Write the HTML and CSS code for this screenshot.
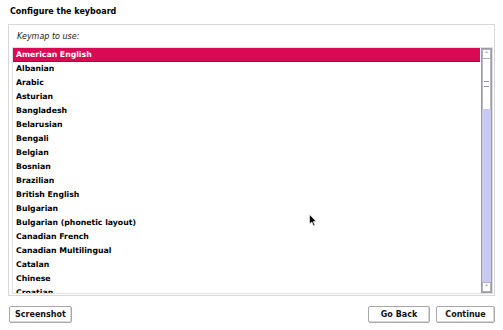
FILE: index.html
```html
<!DOCTYPE html>
<html lang="en">
  <head>
    <meta charset="utf-8" />
    <title>Configure the keyboard</title>
    <link rel="stylesheet" href="styles.css">
  </head>
  <body>
    <div class="screen">
      <h1 class="title">Configure the keyboard</h1>

      <div class="frame">
        <div class="question">Keymap to use:</div>
        <div class="listbox">
          <ul class="options">
            <li class="selected">American English</li>
            <li>Albanian</li>
            <li>Arabic</li>
            <li>Asturian</li>
            <li>Bangladesh</li>
            <li>Belarusian</li>
            <li>Bengali</li>
            <li>Belgian</li>
            <li>Bosnian</li>
            <li>Brazilian</li>
            <li>British English</li>
            <li>Bulgarian</li>
            <li>Bulgarian (phonetic layout)</li>
            <li>Canadian French</li>
            <li>Canadian Multilingual</li>
            <li>Catalan</li>
            <li>Chinese</li>
            <li>Croatian</li>
          </ul>
          <div class="scrollbar">
            <div class="arrow">&#708;</div>
            <div class="thumb"><span class="grip"></span></div>
            <div class="track"></div>
            <div class="arrow">&#709;</div>
          </div>
        </div>
      </div>

      <div class="buttons">
        <button class="btn btn-shot">Screenshot</button>
        <span class="spacer"></span>
        <button class="btn btn-back">Go Back</button>
        <button class="btn">Continue</button>
      </div>

      <svg class="pointer" width="8" height="13" viewBox="0 0 8 13">
        <path d="M0.5 0.5 L0.5 10 L2.8 8 L4.6 12 L6 11.3 L4.2 7.5 L7.2 7.5 Z" fill="#000" stroke="#fff" stroke-width="0.6" />
      </svg>
    </div>
  </body>
</html>
```

FILE: styles.css
```css
body {
  margin: 0;
  background-color: #fff;
  font-family: "DejaVu Sans", sans-serif;
  font-size: 8px;
  color: #000;
}

.screen {
  position: relative;
  width: 503px;
  height: 330px;
  display: flex;
  flex-direction: column;
  padding: 0 8px;
  box-sizing: border-box;
}

.title {
  margin: 0;
  padding: 7px 0 0 2px;
  height: 24px;
  font-size: 8px;
  font-weight: bold;
  box-sizing: border-box;
}

.frame {
  height: 272px;
  border: 1px solid #d8d8d8;
  box-sizing: border-box;
  padding: 0 1px 0 3px;
  display: flex;
  flex-direction: column;
}

.question {
  height: 22px;
  padding: 7px 0 0 5px;
  box-sizing: border-box;
  font-style: italic;
  color: #222;
}

.listbox {
  display: flex;
  height: 247px;
  border: 1px solid #e0e0e0;
  box-sizing: border-box;
}

.options {
  flex: 1;
  list-style: none;
  margin: 0;
  padding: 0;
  overflow: hidden;
  font-weight: bold;
  font-size: 7.75px;
}

.options li {
  height: 14px;
  line-height: 14px;
  padding-left: 3px;
  white-space: nowrap;
}

.options li.selected {
  background-color: #d70a53;
  color: #fff;
  border-bottom: 1px solid #a8063e;
  height: 13px;
  line-height: 13px;
}

.scrollbar {
  width: 9px;
  margin-left: 1px;
  border: 1px solid #9a9aa8;
  display: flex;
  flex-direction: column;
  background-color: #c9c9f2;
}

.arrow {
  height: 10px;
  line-height: 10px;
  text-align: center;
  font-size: 7px;
  background-color: #fff;
  border: 1px solid #b0b0bc;
  box-sizing: border-box;
  color: #333;
}

.thumb {
  height: 50px;
  background-color: #fff;
  border-left: 1px solid #b8b8c8;
  border-right: 1px solid #b8b8c8;
  display: flex;
  align-items: center;
  justify-content: center;
}

.grip {
  width: 5px;
  height: 4px;
  border-top: 1px solid #999;
  border-bottom: 1px solid #999;
}

.track {
  flex: 1;
}

.buttons {
  display: flex;
  gap: 6px;
  padding: 10px 0 0 1px;
}

.spacer {
  flex: 1;
}

.btn {
  font-family: "DejaVu Sans", sans-serif;
  font-size: 8px;
  font-weight: bold;
  height: 17px;
  min-width: 59px;
  padding: 0 3px;
  background-color: #fff;
  border: 1px solid #a8a8a8;
  border-radius: 2px;
  box-shadow: inset -1px -1px 0 #d8d8d8;
  color: #111;
}

.btn-shot {
  padding: 0 5px;
}

.btn-back {
  min-width: 62px;
}

.pointer {
  position: absolute;
  left: 309px;
  top: 214px;
}
```
